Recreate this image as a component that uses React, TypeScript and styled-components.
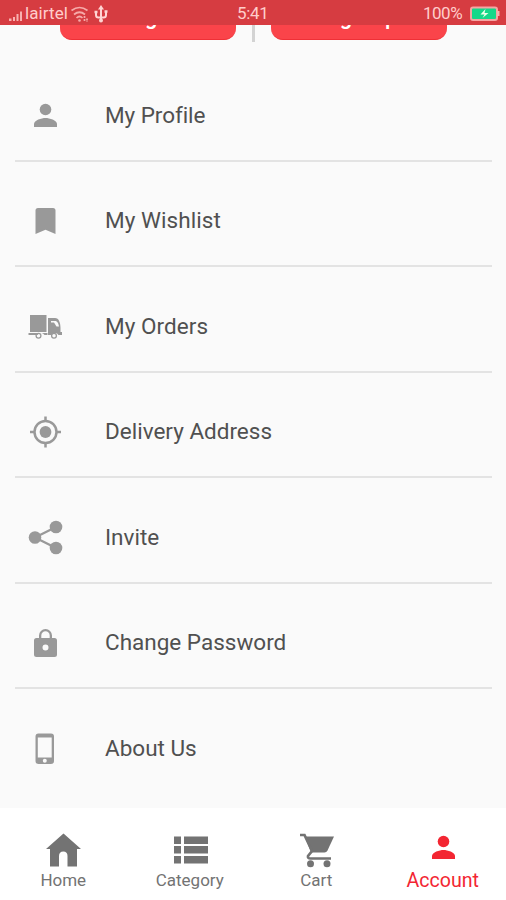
import React from "react";
import styled, { createGlobalStyle } from "styled-components";

const GlobalStyle = createGlobalStyle`
  * { box-sizing: border-box; }
  body { margin: 0; background: #fafafa; font-family: Roboto, sans-serif; }
`;

const Screen = styled.div`
  width: 506px;
  height: 900px;
  display: flex;
  flex-direction: column;
  overflow: hidden;
  background: #fafafa;
`;

const StatusBar = styled.header`
  flex: 0 0 25px;
  display: grid;
  grid-template-columns: 1fr auto 1fr;
  align-items: center;
  padding: 2px 6px 0 9px;
  background: #d63c41;
  color: #ffcdcb;
  font-size: 17px;
  line-height: 23px;
`;

const StatusGroup = styled.div<{ $end?: boolean }>`
  display: flex;
  align-items: center;
  justify-content: ${(p) => (p.$end ? "flex-end" : "flex-start")};
`;

const StatusText = styled.span<{ $width: number; $spacing?: number }>`
  width: ${(p) => p.$width}px;
  letter-spacing: ${(p) => p.$spacing ?? 0}px;
  white-space: nowrap;
`;

const AuthBar = styled.section`
  flex: 0 0 31px;
  display: flex;
  align-items: flex-start;
  padding-left: 60px;
  overflow: hidden;
`;

const AuthButton = styled.button`
  display: flex;
  justify-content: center;
  align-items: flex-start;
  width: 176px;
  height: 50px;
  margin-top: -35px;
  padding: 14px 0 0;
  border: 0;
  border-bottom: 1px solid #ef3036;
  border-radius: 12px;
  background: #fa444a;
  color: #fff;
  font: 500 22px/26px Roboto, sans-serif;
  letter-spacing: 0.2px;
`;

const AuthDivider = styled.span`
  width: 3px;
  height: 17px;
  margin: 0 16px;
  background: #d3d3d3;
`;

const Menu = styled.main`
  flex: 0 0 752px;
  padding: 0 14px 0 15px;
`;

const MenuRow = styled.div`
  height: 105.5px;
  display: flex;
  align-items: center;
  padding: 16px 0 0 10px;
  border-bottom: 2px solid #e3e3e3;
  color: #505050;
  font-size: 22.5px;
  line-height: 30px;

  &:last-child { border-bottom-color: transparent; }
`;

const MenuIcon = styled.svg`
  flex: none;
  width: 40px;
  height: 40px;
  margin-right: 40px;
  fill: #999;
`;

const MenuLabel = styled.span<{ $spacing: number }>`
  margin-bottom: 2px;
  letter-spacing: ${(p) => p.$spacing}px;
`;

const TabBar = styled.nav`
  flex: 1;
  display: grid;
  grid-template-columns: repeat(4, 1fr);
  background: #fff;
`;

const Tab = styled.a<{ $active?: boolean }>`
  display: flex;
  flex-direction: column;
  align-items: center;
  padding-top: 22px;
  color: ${(p) => (p.$active ? "#f32632" : "#737373")};
  font-size: ${(p) => (p.$active ? 19.6 : 17)}px;
  line-height: ${(p) => (p.$active ? 24 : 22)}px;
  letter-spacing: 0;
`;

const TabIcon = styled.svg`
  width: 40px;
  height: 40px;
  margin-bottom: -1px;
  fill: currentColor;
`;

const Person = () => (
  <>
    <circle cx="20.5" cy="14" r="5.8" />
    <path d="M9 31.500v-3c0-3.800 7.600-6 11.500-6S32 24.700 32 28.500v3z" />
  </>
);

const items = [
  { label: "My Profile", spacing: -0.06, icon: <g transform="translate(0 -.5)"><Person /></g> },
  { label: "My Wishlist", spacing: 0.06, icon: <path d="M13 7h15q2.500 0 2.500 2.500V33l-10-4.300-10 4.300V9.500Q10.500 7 13 7z" /> },
  {
    label: "My Orders",
    spacing: 0.06,
    icon: (
      <>
        <path d="M5 8h16.500v17H5zM3.500 26h19v2h-3a4 4 0 0 0-7 0h-9z" />
        <path fillRule="evenodd" d="M23 11h7c4 0 5.500 5 5.500 10v4H37v3h-3.500a4 4 0 0 0-7 0H23zm3 3v1.500h3l2.500 4H34c-.4-3-1.500-5.500-4-5.500z" />
        <g fill="none" stroke="#999" strokeWidth="1.300"><circle cx="13.500" cy="28.700" r="2.400" /><circle cx="29" cy="28.700" r="2.400" /></g>
      </>
    ),
  },
  {
    label: "Delivery Address",
    spacing: 0,
    icon: (
      <>
        <circle cx="20.500" cy="20" r="5.900" />
        <g fill="none" stroke="#999" strokeWidth="2.500"><circle cx="20.500" cy="20" r="11" /><path d="M20.500 4.500v5M20.500 30.500v5M5 20h5M31 20h5" /></g>
      </>
    ),
  },
  {
    label: "Invite",
    spacing: 0,
    icon: <g transform="translate(0 -1)"><path d="M31 10 10 20.500 31 31" fill="none" stroke="#999" strokeWidth="2.300" /><circle cx="10" cy="20.500" r="6.300" /><circle cx="31" cy="10" r="6.300" /><circle cx="31" cy="31" r="6.300" /></g>,
  },
  {
    label: "Change Password",
    spacing: 0,
    icon: <path fillRule="evenodd" d="M11.500 15H14v-2.500a6.500 6.500 0 0 1 13 0V15h2.500Q32 15 32 17.500v14Q32 34 29.500 34h-18Q9 34 9 31.500v-14Q9 15 11.500 15zm4.800 0h8.400v-2.500a4.200 4.200 0 0 0-8.400 0zM23.500 24.500a3 3 0 1 0-6 0 3 3 0 0 0 6 0z" />,
  },
  {
    label: "About Us",
    spacing: 0,
    icon: <path transform="translate(0 -1)" fillRule="evenodd" d="M13.500 5.500h12.500q3 0 3 3V33q0 3-3 3H13.500q-3 0-3-3V8.500q0-3 3-3zM12.800 9.500v20h13.900v-20zm7 21.300a2 2 0 1 0 0 4 2 2 0 0 0 0-4z" />,
  },
];

const tabs = [
  { label: "Home", icon: <path d="M20.500 3.500 38 19h-4v17.500h-9.500V26q0-4.500-4.200-4.500T16 26v10.500H7V19H3z" /> },
  { label: "Category", icon: <path d="M4 6.500h7V14H4zm10 0h24V14H14zM4 16h7v7.500H4zm10 0h24v7.500H14zM4 26h7v7.500H4zm10 0h24v7.500H14z" /> },
  {
    label: "Cart",
    icon: (
      <>
        <path d="M9 6.500H38L31.500 20.500q-1 2-3 2H15z" />
        <path d="M4 5h4.500L16 21l-4 5q-.5 2.500 2.500 2.500H35" fill="none" stroke="currentColor" strokeWidth="2.700" />
        <circle cx="14.500" cy="33.800" r="3.500" /><circle cx="31" cy="33.800" r="3.500" />
      </>
    ),
  },
  { label: "Account", icon: <g transform="translate(0 -2.500)"><Person /></g> },
];

export default function App() {
  return (
    <>
      <GlobalStyle />
      <Screen>
        <StatusBar>
          <StatusGroup>
            <svg width="16" height="20" viewBox="0 0 16 20" fill="#f8b1b0">
              <path d="M0 14.500h2.500V17H0zM4 13h2v4H4zM7.500 10h2v7h-2zM11 7.500h2V17h-2z" />
            </svg>
            <StatusText $width={46} $spacing={0.1}>lairtel</StatusText>
            <svg width="19" height="20" viewBox="0 0 19 20" fill="none" stroke="#f6aaa9" strokeWidth="1.700">
              <path d="M.5 6.500q8-6 16 0M3 10.500q5.500-4.500 11 0M5.500 14q3-3 6 0" />
              <circle cx="8.500" cy="16.500" r="1.300" fill="#f6aaa9" stroke="none" />
              <path d="M13.500 12v5.500M16 14.500V18" strokeDasharray="2 1" />
            </svg>
            <svg width="20" height="20" viewBox="-2 0 20 20" fill="none" stroke="#ffd5d3" strokeWidth="2">
              <path d="M9 3v14M4 8v3q0 2.500 2.500 2.500h5q2.500 0 2.500-2.500V7.500" />
              <path d="m9 1 3 4.500H6z" fill="#ffd5d3" stroke="none" />
              <circle cx="9" cy="16.500" r="1" fill="#ffd5d3" />
              <path d="M2.500 8h3M12.500 7.500h3" strokeWidth="2.500" />
            </svg>
          </StatusGroup>
          <StatusText $width={35} $spacing={-0.3}>5:41</StatusText>
          <StatusGroup $end>
            <StatusText $width={47} $spacing={-0.5}>100%</StatusText>
            <svg width="30" height="16" viewBox="0 0 30 16">
              <rect x="1" y="1.500" width="26" height="12.500" rx="2" fill="#15d889" stroke="#f5a5a3" strokeWidth="2" />
              <path d="M27 5h2.500v5H27z" fill="#f5b2ae" />
              <path d="m15.500 3-5 5.500h4L12.500 12l6-5h-4z" fill="#edffe8" />
            </svg>
          </StatusGroup>
        </StatusBar>
        <AuthBar>
          <AuthButton>Login</AuthButton>
          <AuthDivider />
          <AuthButton>Sign Up</AuthButton>
        </AuthBar>
        <Menu>
          {items.map((item) => (
            <MenuRow key={item.label}>
              <MenuIcon viewBox="0 0 40 40">{item.icon}</MenuIcon>
              <MenuLabel $spacing={item.spacing}>{item.label}</MenuLabel>
            </MenuRow>
          ))}
        </Menu>
        <TabBar>
          {tabs.map((tab) => (
            <Tab key={tab.label} $active={tab.label === "Account"}>
              <TabIcon viewBox="0 0 40 40">{tab.icon}</TabIcon>
              {tab.label}
            </Tab>
          ))}
        </TabBar>
      </Screen>
    </>
  );
}
